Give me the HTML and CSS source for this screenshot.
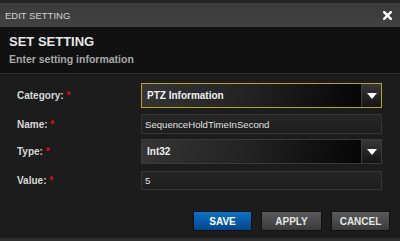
FILE: index.html
```html
<!DOCTYPE html>
<html lang="en">
<head>
    <meta charset="UTF-8">
    <meta name="viewport" content="width=device-width, initial-scale=1.0">
    <title>Edit Setting</title>
    <link rel="stylesheet" href="styles.css">
</head>
<body>

    <div class="dialog">
        <div class="titlebar">
            <span class="titlebar-text">EDIT SETTING</span>
            <button class="close" aria-label="Close">
                <svg width="9" height="9" viewBox="0 0 9 9">
                    <path d="M1.2 1.2 L7.8 7.8 M7.8 1.2 L1.2 7.8" stroke="#fff" stroke-width="2.4" stroke-linecap="square"/>
                </svg>
            </button>
        </div>

        <div class="intro">
            <h2>SET SETTING</h2>
            <p>Enter setting information</p>
        </div>

        <div class="form">
            <div class="row row-category">
                <label>Category: <span class="req">*</span></label>
                <div class="select active">
                    <span class="select-value">PTZ Information</span>
                    <span class="select-arrow"></span>
                </div>
            </div>

            <div class="row row-name">
                <label>Name: <span class="req">*</span></label>
                <div class="input">SequenceHoldTimeInSecond</div>
            </div>

            <div class="row row-type">
                <label>Type: <span class="req">*</span></label>
                <div class="select">
                    <span class="select-value">Int32</span>
                    <span class="select-arrow"></span>
                </div>
            </div>

            <div class="row row-value">
                <label>Value: <span class="req">*</span></label>
                <div class="input">5</div>
            </div>
        </div>

        <div class="buttons">
            <button class="btn btn-save">SAVE</button>
            <button class="btn btn-apply">APPLY</button>
            <button class="btn btn-cancel">CANCEL</button>
        </div>
    </div>

</body>
</html>
```

FILE: styles.css
```css
:root {
    --bg-dark: #111111;
    --bg-body: #1c1c1c;
    --text-light: #e6e6e6;
    --text-grey: #a8a8a8;
    --yellow: #b9a21e;
    --red: #e01010;
}

* {
    box-sizing: border-box;
}

html, body {
    margin: 0;
    padding: 0;
    background-color: #222;
}

body {
    font-family: "Liberation Sans", Arial, sans-serif;
}

.dialog {
    width: 400px;
    height: 241px;
    padding-top: 3px;
    background-color: #232323;
    border-bottom: 3px solid #2e2e2e;
    display: flex;
    flex-direction: column;
}

.titlebar {
    height: 24px;
    background: linear-gradient(#3b3b3b, #424242);
    display: flex;
    align-items: center;
    justify-content: space-between;
    padding: 0 8px 0 5px;
}

.titlebar-text {
    color: #d2d2d2;
    font-size: 9.5px;
    padding-top: 1px;
}

.close {
    border: none;
    background: none;
    padding: 0;
    width: 9px;
    height: 9px;
    display: flex;
}

.intro {
    height: 47px;
    background-color: var(--bg-dark);
    border-bottom: 1px solid #2c2c2c;
    padding: 7px 9px 0;
}

.intro h2 {
    margin: 0;
    font-size: 13px;
    font-weight: bold;
    color: var(--text-light);
    line-height: 16px;
}

.intro p {
    margin: 3px 0 0;
    font-size: 10.5px;
    font-weight: bold;
    color: var(--text-grey);
    line-height: 13px;
}

.form {
    background-color: var(--bg-body);
    flex: 1;
    padding: 9px 0 0 17px;
}

.row {
    display: grid;
    grid-template-columns: 124px 241px;
    align-items: center;
}

.row-category {
    height: 25px;
}

.row-name {
    height: 20px;
    margin-top: 6px;
}

.row-type {
    height: 25px;
    margin-top: 5px;
}

.row-value {
    height: 19px;
    margin-top: 7px;
}

label {
    font-size: 10px;
    font-weight: bold;
    color: #d8d8d8;
}

.req {
    color: var(--red);
}

.select {
    height: 100%;
    border: 1px solid #3a3a3a;
    display: flex;
    background: linear-gradient(100deg, #353535 0%, #222 45%, #000 100%);
}

.select.active {
    border-color: var(--yellow);
}

.select-value {
    flex: 1;
    display: flex;
    align-items: center;
    padding-left: 5px;
    font-size: 10px;
    font-weight: bold;
    color: #f0f0f0;
}

.select-arrow {
    width: 20px;
    border-left: 1px solid #3a3a3a;
    background: linear-gradient(#383838, #141414);
    display: flex;
    align-items: center;
    justify-content: center;
}

.select-arrow::after {
    content: "";
    border-left: 5px solid transparent;
    border-right: 5px solid transparent;
    border-top: 6px solid #fff;
}

.input {
    height: 100%;
    border: 1px solid #353535;
    background: linear-gradient(#262626, #1e1e1e);
    display: flex;
    align-items: center;
    padding-left: 3px;
    font-size: 9.6px;
    color: #e0e0e0;
}

.buttons {
    background-color: var(--bg-body);
    display: flex;
    justify-content: flex-end;
    gap: 9px;
    padding: 0 10px 7px 0;
}

.btn {
    height: 20px;
    font-family: "Liberation Sans", Arial, sans-serif;
    font-size: 10px;
    font-weight: bold;
    color: #e4e4e4;
    border: 1px solid #111;
    padding: 0;
    cursor: pointer;
}

.btn-save {
    width: 59px;
    color: #fff;
    background: linear-gradient(#0b72c6, #04478a);
}

.btn-apply {
    width: 61px;
    background: linear-gradient(#5a5a5a, #3a3a3a);
}

.btn-cancel {
    width: 59px;
    background: linear-gradient(#5a5a5a, #3a3a3a);
}
```
